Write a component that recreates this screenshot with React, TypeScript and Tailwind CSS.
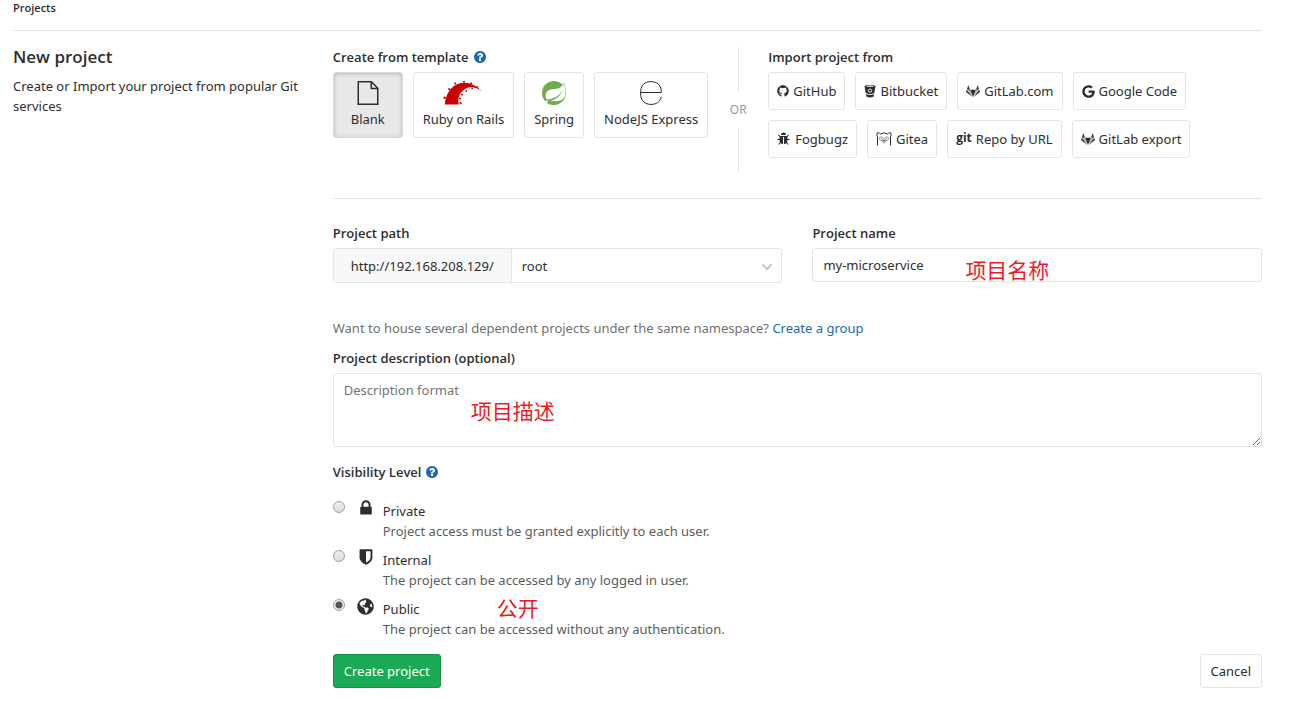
import { useState, type ReactNode } from "react";
import { FaChevronDown, FaGithub, FaGlobeAmericas, FaGoogle } from "react-icons/fa";
import { SiSpring } from "react-icons/si";

const BTN = "border border-[#e5e5e5] rounded-[3px] bg-white cursor-pointer";
const HEADING = "font-semibold leading-5 font-['Open_Sans',sans-serif]";
const NOTE = "absolute pointer-events-none text-[21px] leading-5 text-[#ed1c24] font-['Noto_Sans_CJK_SC',sans-serif]";

function Glyph({ d, size }: { d: string; size: number }) {
  return (
    <svg width={size} height={size} viewBox="0 0 1792 1792" fill="currentColor" className="shrink-0" aria-hidden="true">
      <path d={d} />
    </svg>
  );
}

const QUESTION =
  "M1024 1376v-192q0-14-9-23t-23-9h-192q-14 0-23 9t-9 23v192q0 14 9 23t23 9h192q14 0 23-9t9-23zm256-672q0-88-55.500-163t-138.500-116-170-41q-243 0-371 213-15 24 8 42l132 100q7 6 19 6 16 0 25-12 53-68 86-92 34-24 86-24 48 0 85.500 26t37.500 59q0 38-20 61t-68 45q-63 28-115.500 86.500t-52.500 125.500v36q0 14 9 23t23 9h192q14 0 23-9t9-23q0-19 21.500-49.500t54.500-49.500q32-18 49-28.500t46-35 44.500-48 28-60.500 12.500-81zm384 192q0 209-103 385.500t-279.500 279.500-385.500 103-385.500-103-279.500-279.500-103-385.500 103-385.500 279.500-279.500 385.500-103 385.500 103 279.500 279.500 103 385.500z";
const LOCK =
  "M640 768h512v-192q0-106-75-181t-181-75-181 75-75 181v192zm832 96v576q0 40-28 68t-68 28h-960q-40 0-68-28t-28-68v-576q0-40 28-68t68-28h32v-192q0-184 132-316t316-132 316 132 132 316v192h32q40 0 68 28t28 68z";
const SHIELD =
  "M1344 960v-640h-448v1137q119-63 213-137 235-184 235-360zm192-768v768q0 86-33.500 170.500t-83 150-118 127.500-126.500 103-121 77.500-89.500 49.500-42.500 20q-12 6-26 6t-26-6q-16-7-42.500-20t-89.500-49.500-121-77.500-126.500-103-118-127.500-83-150-33.500-170.500v-768q0-26 19-45t45-19h1152q26 0 45 19t19 45z";
const BUG =
  "M1632 960q0 26-19 45t-45 19h-224q0 171-67 290l208 209q19 19 19 45t-19 45q-18 19-45 19t-45-19l-198-197q-5 5-15 13t-42 28.500-65 36.500-82 29-97 13v-896h-128v896q-51 0-101.500-13.500t-87-33-66-39-43.500-32.500l-15-14-183 207q-20 21-48 21-24 0-43-16-19-18-20.500-44.500t15.500-46.500l202-227q-58-114-58-274h-224q-26 0-45-19t-19-45 19-45 45-19h224v-294l-173-173q-19-19-19-45t19-45 45-19 45 19l173 173h844l173-173q19-19 45-19t45 19 19 45-19 45l-173 173v294h224q26 0 45 19t19 45zm-480-576h-640q0-133 93.500-226.500t226.500-93.500 226.500 93.500 93.500 226.500z";

function BucketIcon() {
  return (
    <svg width="12" height="14" viewBox="0 0 12 14" fill="#2e2e2e" aria-hidden="true" className="shrink-0">
      <path d="M.5 2.300C.5.500 11.500.5 11.500 2.300L10.300 9Q6 11.300 1.700 9z" />
      <path d="M1.900 10Q6 12 10.100 10l-.5 2.400Q6 14.500 2.400 12.400z" />
      <ellipse cx="6" cy="2.200" rx="3.800" ry=".6" fill="#fff" />
      <circle cx="6" cy="6.700" r="1.600" fill="none" stroke="#fff" strokeWidth=".9" />
    </svg>
  );
}

function TanukiIcon() {
  return (
    <svg width="14" height="14" viewBox="0 0 14 14" aria-hidden="true" className="shrink-0">
      <path d="M2.200 1 4.200 5.700H.8zM11.800 1 9.800 5.700h3.400z" fill="#444" />
      <path d="M.8 5.700 0 8l6.500 4.900zM13.200 5.700 14 8l-6.500 4.900z" fill="#2e2e2e" />
      <path d="M1.500 6h2.400l2.300 5.700zM12.500 6h-2.400l-2.300 5.700z" fill="#aaa" />
      <path d="M4.100 5.800h5.800L7 13z" fill="#2e2e2e" />
    </svg>
  );
}

function GiteaIcon() {
  return (
    <svg width="16" height="14" viewBox="0 0 16 14" fill="none" stroke="#2e2e2e" aria-hidden="true" className="shrink-0">
      <path d="M1.500 13.500V4.500L.8 3.200 1.300.8l2 .2L4.500 2Q8-.3 11.500 2l1.200-1 2-.2.5 2.400-.7 1.300v9" />
      <circle cx="5.300" cy="6.700" r="1.800" strokeWidth=".5" />
      <circle cx="10.700" cy="6.700" r="1.800" strokeWidth=".5" />
      <path d="M6.500 9Q8 7.500 9.500 9 9 11 8 11T6.500 9z" strokeWidth=".5" />
      <path d="M7.300 8.300h1.400L8 9.300z" fill="#2e2e2e" strokeWidth=".4" />
      <circle cx="5.500" cy="6.800" r=".4" fill="#2e2e2e" stroke="none" />
      <circle cx="10.500" cy="6.800" r=".4" fill="#2e2e2e" stroke="none" />
    </svg>
  );
}

function BlankIcon() {
  return (
    <svg width="22" height="24" viewBox="0 0 22 24" fill="none" stroke="#2e2e2e" strokeWidth="1.500" aria-hidden="true">
      <path d="M1.250.75h13.250l6.250 6.500v16H1.250z" />
      <path d="M14.250.75v6.750h6.500" />
    </svg>
  );
}

function RailsIcon() {
  return (
    <svg width="40" height="24" viewBox="0 0 40 24" fill="#c00" aria-hidden="true">
      <path d="M1.800 23.500C2.500 14 7.500 5 16 2.500c8.500-2.500 16 1 23.200 7.800C33 6.500 27.500 5 22.500 7.800c-6 3.500-8 9-6.800 15.700z" />
      <path d="m.8 15.500 2 .6-.5 2-1.900-.4zM6 6.800l1.600 1.300-1.200 1.500-1.500-1.100zM12.200 1.300l1.200 1.500-1.500 1-1-1.400zM20 0h2l-.1 1.500-2-.1zM27.500 1.200l1.800.7-.5 1.400-1.800-.7zM34 4.800l1.500.9-.5 1-1.600-.8zM28.500 6.600l1.500.1-.1 1.500-1.600-.2zM22.800 9l1.500.6-.6 1.500-1.500-.7zM18.500 12.400l1.600 1-.9 1.400-1.500-1zM16.400 16.500l1.800.5-.3 1.600-1.900-.4zM16.400 21l2 .2.2 2-2-.2z" />
    </svg>
  );
}

function ExpressIcon() {
  return (
    <svg width="22" height="24" viewBox="0 0 22 24" fill="none" stroke="#2e2e2e" aria-hidden="true">
      <path d="M.7 11.500h20.600V9.800C20.800 4 17 .6 11 .6S1.200 4 .7 9.800v4.400c.5 5.800 4.300 9.200 10.300 9.200 5.500 0 9.200-2.500 10.200-7.700" />
    </svg>
  );
}

const TEMPLATES: { id: string; label: string; icon: ReactNode }[] = [
  { id: "blank", label: "Blank", icon: <BlankIcon /> },
  { id: "rails", label: "Ruby on Rails", icon: <RailsIcon /> },
  { id: "spring", label: "Spring", icon: <SiSpring size={24} className="text-[#70ad51]" /> },
  { id: "express", label: "NodeJS Express", icon: <ExpressIcon /> },
];

const IMPORTS: { label: string; icon: ReactNode }[] = [
  { label: "GitHub", icon: <FaGithub size={12} /> },
  { label: "Bitbucket", icon: <BucketIcon /> },
  { label: "GitLab.com", icon: <TanukiIcon /> },
  { label: "Google Code", icon: <FaGoogle size={13} /> },
  { label: "Fogbugz", icon: <Glyph d={BUG} size={14} /> },
  { label: "Gitea", icon: <GiteaIcon /> },
  { label: "Repo by URL", icon: <span className="text-[12px] leading-4 pb-[2px] font-bold font-['Open_Sans',sans-serif]">git</span> },
  { label: "GitLab export", icon: <TanukiIcon /> },
];

const LEVELS: { id: string; label: string; text: string; icon: ReactNode; note?: string }[] = [
  { id: "private", label: "Private", text: "Project access must be granted explicitly to each user.", icon: <Glyph d={LOCK} size={18} /> },
  { id: "internal", label: "Internal", text: "The project can be accessed by any logged in user.", icon: <Glyph d={SHIELD} size={18} /> },
  { id: "public", label: "Public", text: "The project can be accessed without any authentication.", icon: <FaGlobeAmericas size={17} />, note: "公开" },
];

export default function App() {
  const [template, setTemplate] = useState("blank");
  const [level, setLevel] = useState("public");

  return (
    <div className="bg-white pl-[13px] pr-11 pb-4 text-[13px] leading-5 text-[#2e2e2e] font-['Noto_Sans','Noto_Sans_CJK_SC',sans-serif]">
      <header className="border-b border-[#e5e5e5] pb-[14px] text-[11px] leading-4 font-semibold font-['Open_Sans',sans-serif]">Projects</header>

      <div className="mt-4 grid grid-cols-4 gap-x-[30px]">
        <div>
          <h1 className="text-[17px] leading-5 font-semibold font-['Open_Sans',sans-serif]">New project</h1>
          <p className="mt-[9px]">Create or Import your project from popular Git services</p>
        </div>

        <form className="col-span-3" onSubmit={e => e.preventDefault()}>
          {/* Template / import */}
          <div className="flex border-b border-[#e5e5e5] pb-[25px]">
            <div className="shrink-0">
              <div className={`${HEADING} flex items-center gap-1`}>
                Create from template
                <span className="text-[#1b69b6]"><Glyph d={QUESTION} size={14} /></span>
              </div>
              <div className="mt-[5px] flex gap-[10px]">
                {TEMPLATES.map(t => (
                  <button
                    key={t.id}
                    type="button"
                    onClick={() => setTemplate(t.id)}
                    className={`h-[66px] px-[9px] flex flex-col items-center justify-center gap-1 border rounded-[3px] cursor-pointer whitespace-nowrap
                      ${template === t.id ? "min-w-[70px] border-[#dadada] bg-[#e8e8e8] shadow-[inset_0_1px_4px_rgba(0,0,0,0.2)]" : "border-[#e5e5e5] bg-white"}`}
                  >
                    {t.icon}
                    {t.label}
                  </button>
                ))}
              </div>
            </div>

            <div className="w-[60px] shrink-0 h-[126px] flex flex-col items-center text-[12px] text-[#999]">
              <span className="w-px flex-1 bg-[#e5e5e5]" />
              <span className="py-2">OR</span>
              <span className="w-px flex-1 bg-[#e5e5e5]" />
            </div>

            <div className="flex-1">
              <div className={HEADING}>Import project from</div>
              <div className="mt-[5px] flex flex-wrap gap-[10px]">
                {IMPORTS.map(i => (
                  <button key={i.label} type="button" className={`${BTN} h-[38px] px-2 flex items-center gap-1`}>
                    {i.icon}
                    {i.label}
                  </button>
                ))}
              </div>
            </div>
          </div>

          {/* Path and name */}
          <div className="mt-6 grid grid-cols-2 gap-x-[30px]">
            <div>
              <label htmlFor="path" className={`${HEADING} block`}>Project path</label>
              <div className="mt-[5px] flex h-[35px] border border-[#e5e5e5] rounded-[3px]">
                <span className="w-[178px] shrink-0 flex items-center justify-center bg-[#f7f8fa] border-r border-[#e5e5e5]">
                  http://192.168.208.129/
                </span>
                <div className="relative flex-1">
                  <select id="path" className="appearance-none w-full h-full px-[10px] bg-transparent outline-none">
                    <option>root</option>
                  </select>
                  <FaChevronDown size={12} className="absolute right-2 top-3 text-[#c4c4c4] pointer-events-none" />
                </div>
              </div>
            </div>
            <div>
              <label htmlFor="name" className={`${HEADING} block`}>Project name</label>
              <div className="relative mt-[5px]">
                <input id="name" defaultValue="my-microservice" className="w-full h-[34px] px-[10px] border border-[#e5e5e5] rounded-[3px] outline-none" />
                <span className={`${NOTE} left-[153px] top-[11px]`}>项目名称</span>
              </div>
            </div>
          </div>

          <p className="mt-[35px] text-[#707070]">
            Want to house several dependent projects under the same namespace?{" "}
            <a href="#group" className="text-[#1b69b6]">Create a group</a>
          </p>

          <label htmlFor="description" className={`${HEADING} block mt-[10px]`}>Project description (optional)</label>
          <div className="relative mt-[5px]">
            <textarea
              id="description"
              placeholder="Description format"
              className="block w-full h-[74px] px-[10px] py-[6px] border border-[#e5e5e5] rounded-[3px] resize-y outline-none placeholder:text-[#757575]"
            />
            <span className={`${NOTE} left-[138px] top-[27px]`}>项目描述</span>
          </div>

          {/* Visibility */}
          <div className={`${HEADING} mt-[15px] flex items-center gap-1`}>
            Visibility Level
            <span className="text-[#1b69b6]"><Glyph d={QUESTION} size={14} /></span>
          </div>
          <div className="mt-[19px] flex flex-col gap-[9px]">
            {LEVELS.map(l => (
              <div key={l.id} className="relative flex items-start">
                <input
                  type="radio"
                  id={l.id}
                  name="visibility"
                  checked={level === l.id}
                  onChange={() => setLevel(l.id)}
                  className="appearance-none size-3 shrink-0 rounded-full border border-[#a0a0a0] bg-linear-to-b from-[#eee] to-[#ddd] checked:bg-[radial-gradient(circle,#555_0_3px,#eee_4px)]"
                />
                <label htmlFor={l.id} className="flex">
                  <span className="w-[38px] h-[14px] flex items-center justify-center pl-1">{l.icon}</span>
                  <span>
                    <span className="block">{l.label}</span>
                    <span className="block text-[#5c5c5c]">{l.text}</span>
                  </span>
                </label>
                {l.note && <span className={`${NOTE} left-[164px] -top-[2px]`}>{l.note}</span>}
              </div>
            ))}
          </div>

          <div className="mt-[15px] flex justify-between">
            <button type="submit" className="h-[34px] px-[10px] rounded-[3px] border border-[#168f48] bg-[#1aaa55] text-white cursor-pointer">
              Create project
            </button>
            <button type="button" className={`${BTN} h-[34px] px-[10px]`}>Cancel</button>
          </div>
        </form>
      </div>
    </div>
  );
}
